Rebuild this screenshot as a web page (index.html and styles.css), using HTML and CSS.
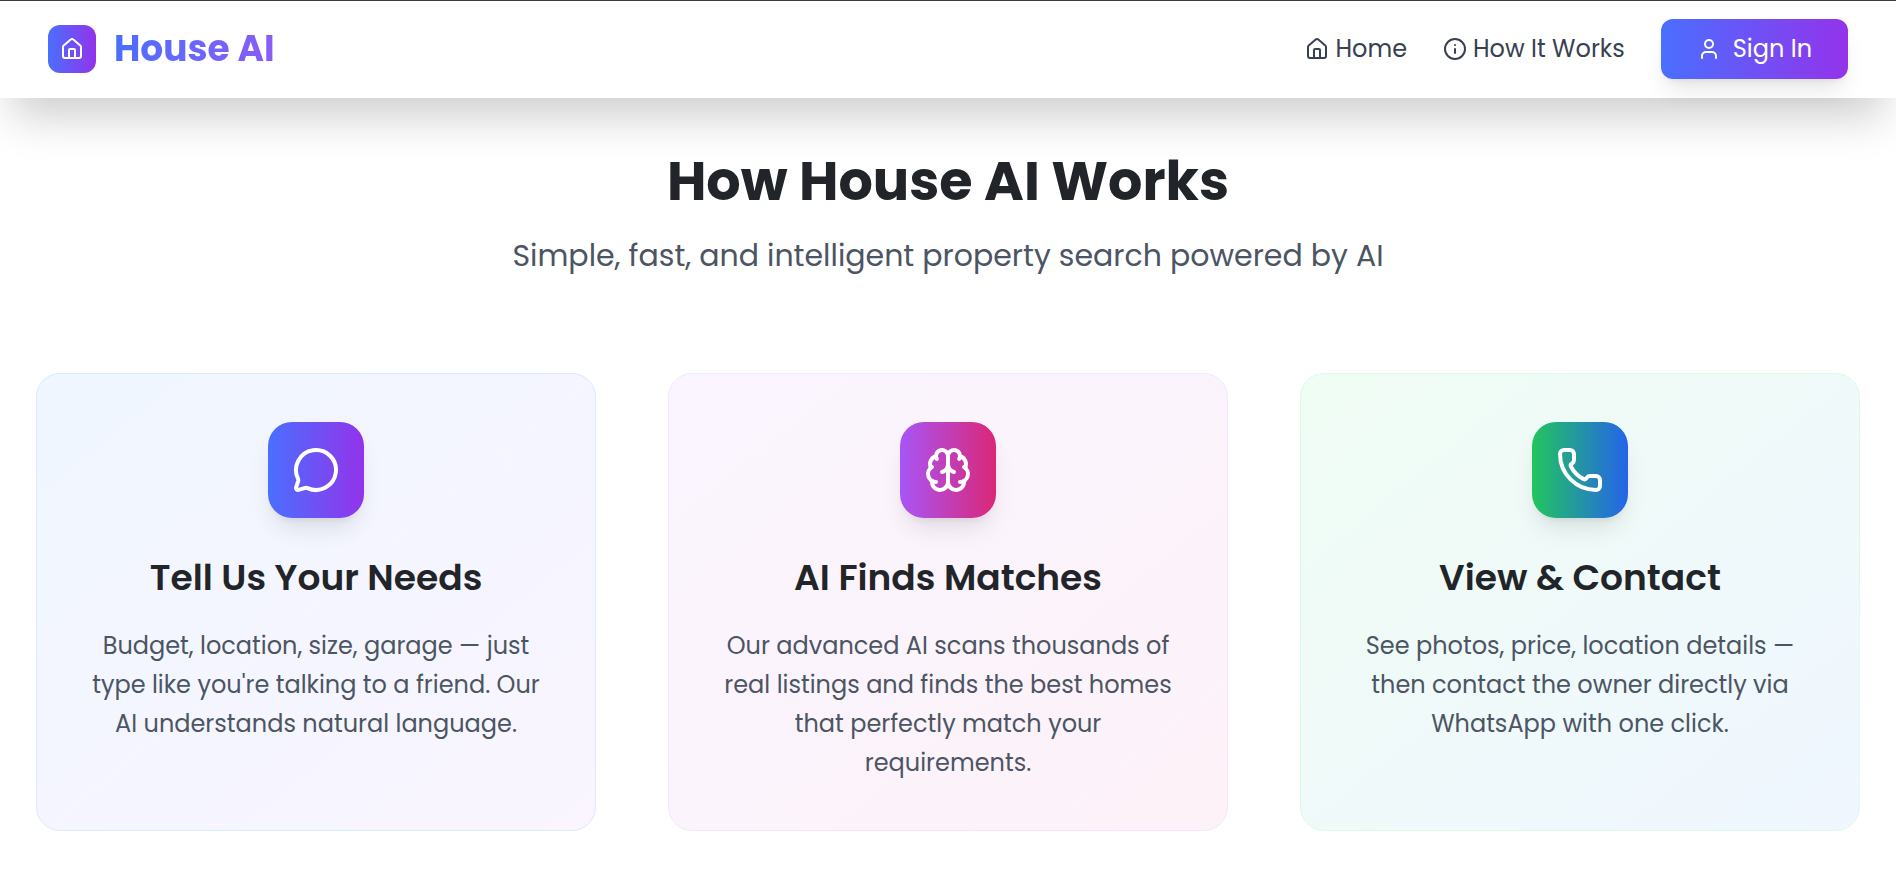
FILE: index.html
```html
<!DOCTYPE html>
<html lang="en">
<head>
<meta charset="utf-8">
<meta name="viewport" content="width=device-width, initial-scale=1">
<title>House AI</title>
<link rel="stylesheet" href="styles.css">
</head>
<body>
<header class="site-header">
  <a class="brand" href="#">
    <span class="brand-mark">
      <svg class="icon" viewBox="0 0 24 24" aria-hidden="true"><path d="M15 21v-8a1 1 0 0 0-1-1h-4a1 1 0 0 0-1 1v8"/><path d="M3 10a2 2 0 0 1 .709-1.528l7-5.999a2 2 0 0 1 2.582 0l7 5.999A2 2 0 0 1 21 10v9a2 2 0 0 1-2 2H5a2 2 0 0 1-2-2z"/></svg>
    </span>
    <span class="brand-name">House AI</span>
  </a>
  <nav class="nav">
    <a class="nav-link" href="#">
      <svg class="icon" viewBox="0 0 24 24" aria-hidden="true"><path d="M15 21v-8a1 1 0 0 0-1-1h-4a1 1 0 0 0-1 1v8"/><path d="M3 10a2 2 0 0 1 .709-1.528l7-5.999a2 2 0 0 1 2.582 0l7 5.999A2 2 0 0 1 21 10v9a2 2 0 0 1-2 2H5a2 2 0 0 1-2-2z"/></svg>
      Home
    </a>
    <a class="nav-link" href="#how-it-works">
      <svg class="icon" viewBox="0 0 24 24" aria-hidden="true"><circle cx="12" cy="12" r="10"/><path d="M12 16v-4"/><path d="M12 8h.01"/></svg>
      How It Works
    </a>
    <button class="sign-in" type="button">
      <svg class="icon" viewBox="0 0 24 24" aria-hidden="true"><path d="M19 21v-2a4 4 0 0 0-4-4H9a4 4 0 0 0-4 4v2"/><circle cx="12" cy="7" r="4"/></svg>
      Sign In
    </button>
  </nav>
</header>
<main class="how" id="how-it-works">
  <div class="intro">
    <h1 class="intro-title">How House AI Works</h1>
    <p class="intro-text">Simple, fast, and intelligent property search powered by AI</p>
  </div>
  <div class="steps">
    <article class="card card-needs">
      <div class="tile tile-needs">
        <svg class="icon icon-large" viewBox="0 0 24 24" aria-hidden="true"><path d="M2.992 16.342a2 2 0 0 1 .094 1.167l-1.065 3.29a1 1 0 0 0 1.236 1.168l3.413-.998a2 2 0 0 1 1.099.092 10 10 0 1 0-4.777-4.719"/></svg>
      </div>
      <h2 class="card-title">Tell Us Your Needs</h2>
      <p class="card-text">Budget, location, size, garage — just type like you're talking to a friend. Our AI understands natural language.</p>
    </article>
    <article class="card card-matches">
      <div class="tile tile-matches">
        <svg class="icon icon-large" viewBox="0 0 24 24" aria-hidden="true"><path d="M12 18V5"/><path d="M15 13a4.17 4.17 0 0 1-3-4 4.17 4.17 0 0 1-3 4"/><path d="M17.598 6.5A3 3 0 1 0 12 5a3 3 0 1 0-5.598 1.5"/><path d="M17.997 5.125a4 4 0 0 1 2.526 5.77"/><path d="M18 18a4 4 0 0 0 2-7.464"/><path d="M19.967 17.483A4 4 0 1 1 12 18a4 4 0 1 1-7.967-.517"/><path d="M6 18a4 4 0 0 1-2-7.464"/><path d="M6.003 5.125a4 4 0 0 0-2.526 5.77"/></svg>
      </div>
      <h2 class="card-title">AI Finds Matches</h2>
      <p class="card-text">Our advanced AI scans thousands of real listings and finds the best homes that perfectly match your requirements.</p>
    </article>
    <article class="card card-contact">
      <div class="tile tile-contact">
        <svg class="icon icon-large" viewBox="0 0 24 24" aria-hidden="true"><path d="M13.832 16.568a1 1 0 0 0 1.213-.303l.355-.465A2 2 0 0 1 17 15h3a2 2 0 0 1 2 2v3a2 2 0 0 1-2 2A18 18 0 0 1 2 4a2 2 0 0 1 2-2h3a2 2 0 0 1 2 2v3a2 2 0 0 1-.8 1.6l-.468.351a1 1 0 0 0-.292 1.233 14 14 0 0 0 6.392 6.384"/></svg>
      </div>
      <h2 class="card-title">View &amp; Contact</h2>
      <p class="card-text">See photos, price, location details — then contact the owner directly via WhatsApp with one click.</p>
    </article>
  </div>
</main>
</body>
</html>
```
FILE: styles.css
```css
*, *::before, *::after { box-sizing: border-box; }

body {
  margin: 0;
  background: #fff;
  color: #212529;
  font-family: Poppins, Inter, "Open Sans", sans-serif;
  font-size: 24px;
  line-height: 36px;
}

h1, h2, p { margin: 0; }
a { color: inherit; text-decoration: none; }

.icon {
  width: 24px;
  height: 24px;
  flex: none;
  fill: none;
  stroke: currentColor;
  stroke-width: 2;
  stroke-linecap: round;
  stroke-linejoin: round;
}
.icon-large { width: 48px; height: 48px; }

.site-header {
  position: sticky;
  top: 0;
  z-index: 1;
  display: flex;
  align-items: center;
  justify-content: space-between;
  padding: 18px 48px 19px;
  border-top: 1px solid #3c3c40;
  background: #fff;
  box-shadow: 0 30px 45px -12px rgba(0, 0, 0, 0.2);
}

.brand { display: flex; align-items: center; gap: 18px; }
.brand-mark {
  display: grid;
  place-items: center;
  width: 48px;
  height: 48px;
  border-radius: 12px;
  background: linear-gradient(90deg, #4a6fff, #9333ea);
  color: #fff;
}
.brand-name {
  background: linear-gradient(90deg, #4a6fff, #8b5cf6);
  background-clip: text;
  -webkit-background-clip: text;
  color: transparent;
  font-size: 36px;
  font-weight: 700;
  line-height: 48px;
}

.nav { display: flex; align-items: center; gap: 36px; color: #374151; }
.nav-link { display: flex; align-items: center; gap: 6px; }
.sign-in {
  display: flex;
  align-items: center;
  gap: 12px;
  padding: 12px 36px;
  border: 0;
  border-radius: 12px;
  background: linear-gradient(90deg, #4a6fff, #9333ea);
  box-shadow: 0 15px 23px -5px rgba(0, 0, 0, 0.1), 0 6px 9px -6px rgba(0, 0, 0, 0.1);
  color: #fff;
  font: inherit;
}

.how { padding: 53px 36px 40px; }
.intro {
  display: grid;
  gap: 24px;
  margin-bottom: 96px;
  text-align: center;
}
.intro-title { font-size: 54px; font-weight: 700; line-height: 60px; }
.intro-text { color: #4b5563; font-size: 30px; line-height: 42px; }

.steps { display: grid; grid-template-columns: repeat(3, 1fr); gap: 72px; }
.card {
  display: flex;
  flex-direction: column;
  align-items: center;
  padding: 48px;
  border: 1px solid;
  border-radius: 24px;
  text-align: center;
}
.card-needs { border-color: #dbeafe; background: linear-gradient(to bottom right, #eff6ff, #faf5ff); }
.card-matches { border-color: #f3e8ff; background: linear-gradient(to bottom right, #faf5ff, #fdf2f8); }
.card-contact { border-color: #dcfce7; background: linear-gradient(to bottom right, #f0fdf4, #eff6ff); }

.tile {
  display: grid;
  place-items: center;
  width: 96px;
  height: 96px;
  margin-bottom: 36px;
  border-radius: 24px;
  box-shadow: 0 15px 23px -5px rgba(0, 0, 0, 0.1), 0 6px 9px -6px rgba(0, 0, 0, 0.1);
  color: #fff;
}
.tile-needs { background: linear-gradient(90deg, #4a6fff, #9333ea); }
.tile-matches { background: linear-gradient(90deg, #a855f7, #db2777); }
.tile-contact { background: linear-gradient(90deg, #22c55e, #2563eb); }

.card-title { margin-bottom: 24px; font-size: 36px; font-weight: 600; line-height: 48px; }
.card-text { color: #4b5563; line-height: 39px; }
```
